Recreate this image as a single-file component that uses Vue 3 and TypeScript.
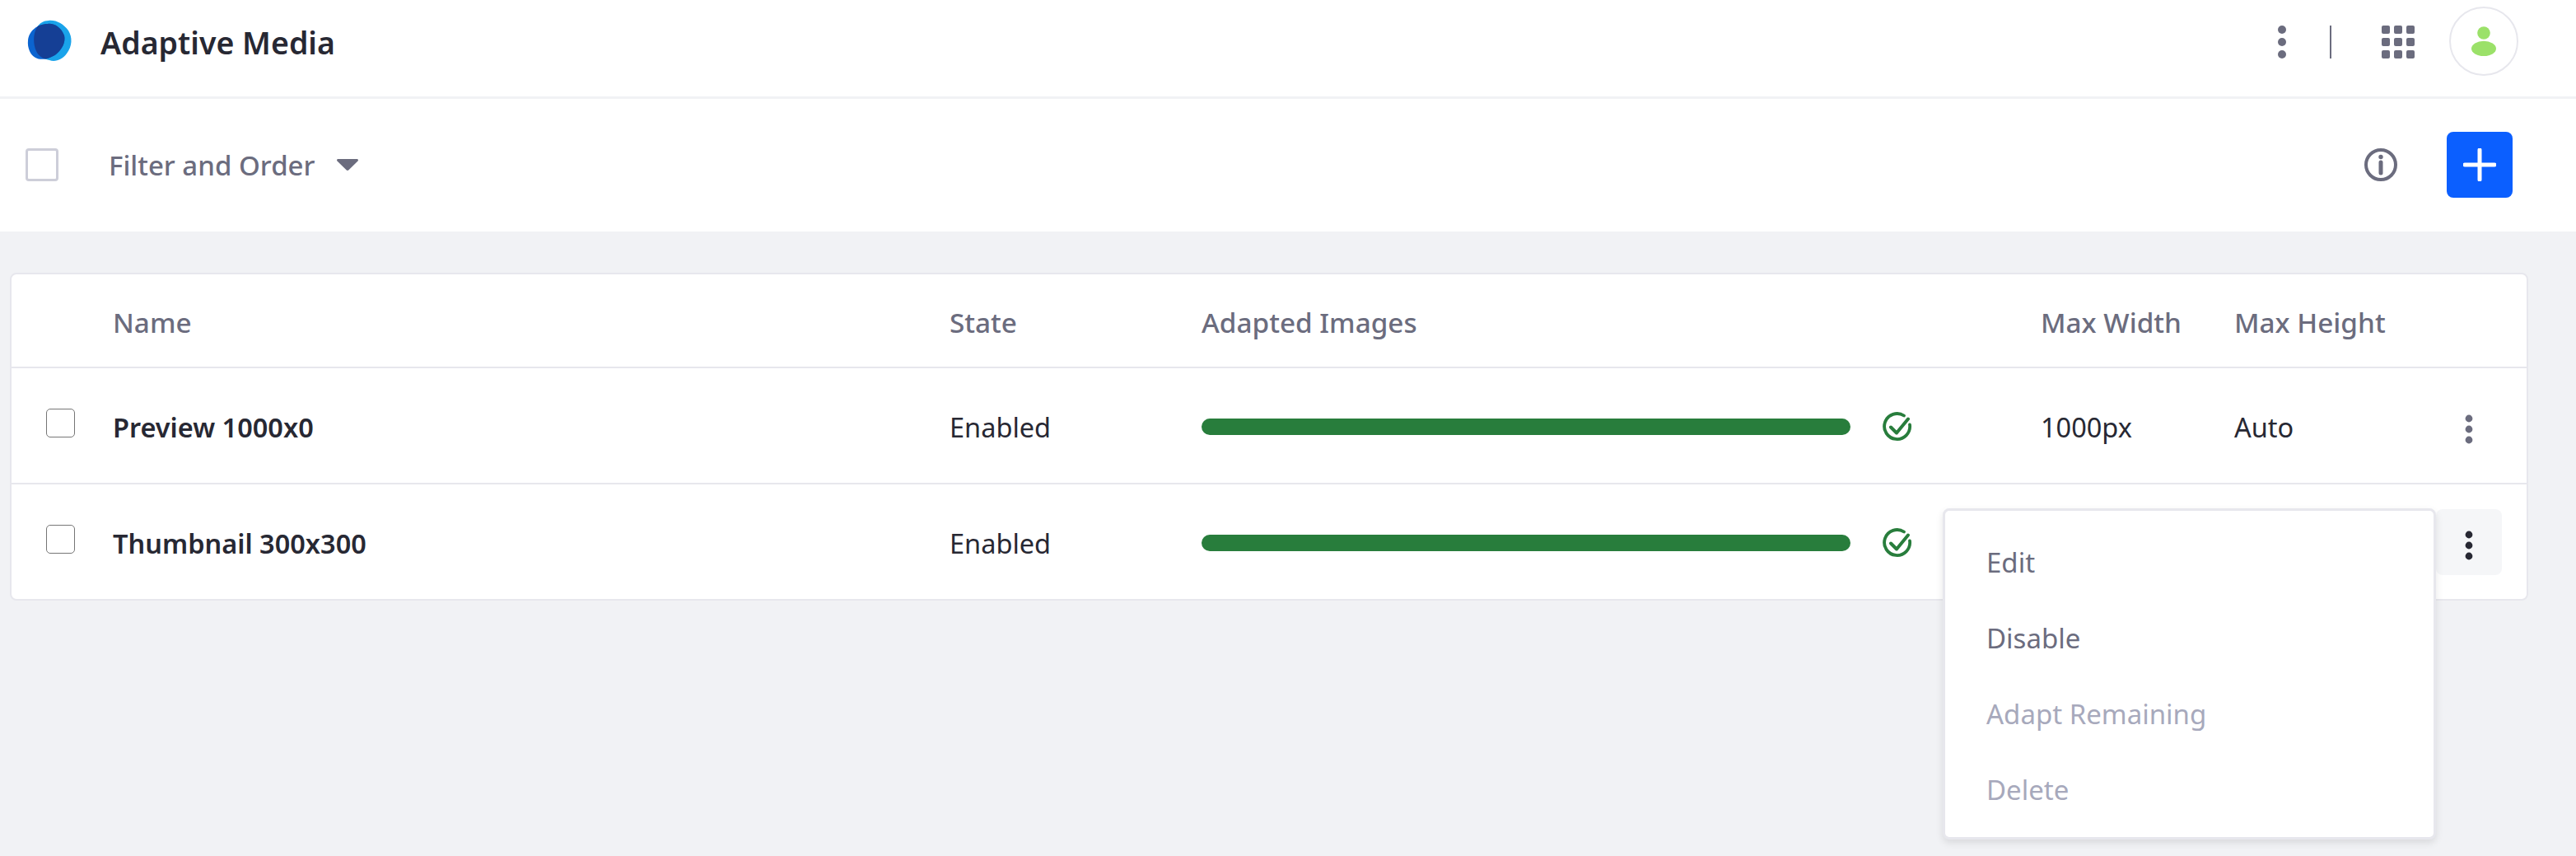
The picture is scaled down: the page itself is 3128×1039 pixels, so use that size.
<script setup lang="ts">
interface Row { name: string; state: string; width: string; height: string; active: boolean }
const rows: Row[] = [
  { name: 'Preview 1000x0', state: 'Enabled', width: '1000px', height: 'Auto', active: false },
  { name: 'Thumbnail 300x300', state: 'Enabled', width: '300px', height: '300px', active: true },
]
const menu = [
  { label: 'Edit', disabled: false },
  { label: 'Disable', disabled: false },
  { label: 'Adapt Remaining', disabled: true },
  { label: 'Delete', disabled: true },
]
</script>

<template>
  <div class="page">
    <header class="nav">
      <svg class="logo" width="60" height="60" viewBox="0 0 60 60">
        <defs>
          <clipPath id="blobclip">
            <path d="M29 5C38 4 47 9 53 17C58 25 58 36 51 45C46 52 37 56 30 53C24 52 17 49 14 42C10 33 10 21 15 13C18 8 23 5 29 5Z" />
          </clipPath>
        </defs>
        <path d="M29 5C38 4 47 9 53 17C58 25 58 36 51 45C46 52 37 56 30 53C24 52 17 49 14 42C10 33 10 21 15 13C18 8 23 5 29 5Z" fill="#1aa3ea" />
        <path d="M4 29C5 18 15 9 28 9C36 8 44 13 48 23C50 32 45 40 38 46C31 51 20 54 13 50C7 47 3 38 4 29Z" fill="#0b64d0" />
        <g clip-path="url(#blobclip)">
          <path d="M4 29C5 18 15 9 28 9C36 8 44 13 48 23C50 32 45 40 38 46C31 51 20 54 13 50C7 47 3 38 4 29Z" fill="#153f95" />
        </g>
      </svg>
      <span class="title">Adaptive Media</span>
      <span class="spacer"></span>
      <svg class="nav-kebab" width="10" height="40" viewBox="0 0 10 40">
        <circle cx="5" cy="5" r="5" /><circle cx="5" cy="20" r="5" /><circle cx="5" cy="35" r="5" />
      </svg>
      <span class="divider"></span>
      <div class="apps">
        <i v-for="n in 9" :key="n"></i>
      </div>
      <div class="avatar">
        <svg width="30" height="36" viewBox="0 0 30 36">
          <circle cx="15" cy="8" r="7.8" fill="#9be169" />
          <ellipse cx="15" cy="27" rx="15" ry="9.2" fill="#9be169" />
        </svg>
      </div>
    </header>

    <section class="toolbar">
      <span class="tool-check"></span>
      <span class="filter">Filter and Order</span>
      <svg class="caret" width="26" height="14" viewBox="0 0 26 14">
        <path d="M1.5 0H24.500C25.800 0 26.400 1.500 25.500 2.400L14.500 13.300C13.700 14.100 12.300 14.100 11.500 13.300L.5 2.400C-.4 1.500.2 0 1.500 0Z" />
      </svg>
      <span class="spacer"></span>
      <svg class="info" width="40" height="40" viewBox="0 0 40 40">
        <circle cx="20" cy="20" r="18" fill="none" stroke="#6b6c7e" stroke-width="4" />
        <circle cx="20" cy="10.500" r="2.700" fill="#6b6c7e" />
        <path d="M20 17V30" stroke="#6b6c7e" stroke-width="5" stroke-linecap="round" fill="none" />
      </svg>
      <button class="add" type="button">
        <svg width="40" height="40" viewBox="0 0 40 40">
          <path d="M20 2V38M2 20H38" stroke="#fff" stroke-width="5" stroke-linecap="round" fill="none" />
        </svg>
      </button>
    </section>

    <main class="card">
      <div class="row head">
        <span></span>
        <span>Name</span>
        <span>State</span>
        <span>Adapted Images</span>
        <span>Max Width</span>
        <span>Max Height</span>
        <span></span>
      </div>
      <div v-for="row in rows" :key="row.name" class="row body">
        <span class="cell-check"><span class="check"></span></span>
        <span class="name">{{ row.name }}</span>
        <span>{{ row.state }}</span>
        <span class="progress">
          <span class="bar"></span>
          <svg class="ok" width="36" height="36" viewBox="0 0 36 36">
            <path d="M26 4.500A15.500 15.500 0 1 0 33 15.500" fill="none" stroke="#287d3c" stroke-width="3.800" stroke-linecap="round" />
            <path d="M10 18.500L17 25.500L31 8.500" fill="none" stroke="#287d3c" stroke-width="4" stroke-linecap="round" stroke-linejoin="round" />
          </svg>
        </span>
        <span>{{ row.active ? '' : row.width }}</span>
        <span>{{ row.active ? '' : row.height }}</span>
        <span class="kebab-wrap">
          <span class="kebab" :class="{ active: row.active }">
            <svg width="10" height="36" viewBox="0 0 10 36">
              <circle cx="5" cy="5" r="4.400" /><circle cx="5" cy="18" r="4.400" /><circle cx="5" cy="31" r="4.400" />
            </svg>
          </span>
          <ul v-if="row.active" class="menu">
            <li v-for="item in menu" :key="item.label" :class="{ disabled: item.disabled }">{{ item.label }}</li>
          </ul>
        </span>
      </div>
    </main>
  </div>
</template>

<style scoped>
.page {
  width: 3128px;
  min-height: 1039px;
  background: #f1f2f5;
  font-family: "Noto Sans", "Open Sans", sans-serif;
  font-size: 32px;
  color: #272833;
  overflow: hidden;
}
.spacer { flex: 1; }
.nav {
  height: 117px;
  box-sizing: content-box;
  background: #fff;
  border-bottom: 3px solid #f1f2f5;
  display: flex;
  align-items: center;
  position: relative;
}
.logo { margin-left: 30px; flex: none; margin-top: -17px; }
.title {
  margin-left: 32px;
  font-size: 37.500px;
  font-weight: 600;
  margin-top: -14px;
}
.nav-kebab { fill: #6b6c7e; margin-top: -16px; flex: none; }
.divider {
  width: 2px;
  height: 40px;
  background: #6b6c7e;
  margin-left: 53px;
  margin-top: -16px;
}
.apps {
  margin-left: 61px;
  margin-top: -16px;
  display: grid;
  grid-template-columns: repeat(3, 10px);
  grid-auto-rows: 10px;
  gap: 5px;
}
.apps i { background: #6b6c7e; border-radius: 2px; display: block; }
.avatar {
  margin-left: 42px;
  margin-right: 70px;
  margin-top: -17px;
  width: 84px;
  height: 84px;
  box-sizing: border-box;
  border: 2px solid #e7e7ed;
  border-radius: 50%;
  display: flex;
  align-items: center;
  justify-content: center;
}
.toolbar {
  height: 161px;
  box-sizing: border-box;
  padding-bottom: 2px;
  background: #fff;
  display: flex;
  align-items: center;
}
.tool-check {
  width: 40px;
  height: 40px;
  box-sizing: border-box;
  border: 3px solid #cdced9;
  border-radius: 4px;
  margin-left: 31px;
}
.filter {
  margin-left: 61px;
  margin-top: 2px;
  color: #6b6c7e;
  font-size: 33px;
  font-weight: 500;
}
.caret { fill: #6b6c7e; margin-left: 26px; flex: none; }
.info { flex: none; }
.add {
  width: 80px;
  height: 80px;
  border: 0;
  padding: 0;
  margin-left: 60px;
  margin-right: 77px;
  background: #0b5fff;
  border-radius: 8px;
  display: flex;
  align-items: center;
  justify-content: center;
}
.card {
  width: 3058px;
  box-sizing: border-box;
  margin: 50px 0 0 12px;
  background: #fff;
  border: 2px solid #e7e7ed;
  border-radius: 8px;
}
.row {
  display: grid;
  grid-template-columns: 123px 1016px 306px 1019px 235px 245px 80px;
  align-items: center;
  padding-right: 30px;
}
.row.head {
  height: 109px;
  padding-top: 3px;
  color: #6b6c7e;
  font-weight: 500;
  font-size: 33.300px;
}
.row.body {
  height: 136px;
  padding-top: 3px;
  border-top: 2px solid #e7e7ed;
  box-sizing: content-box;
  font-size: 32.500px;
}
.cell-check { display: flex; padding-left: 42px; }
.check {
  width: 35px;
  height: 35px;
  box-sizing: border-box;
  border: 1px solid #767676;
  border-radius: 5px;
  background: #fff;
  margin-top: -10px;
}
.name { font-weight: 600; }
.progress { display: flex; align-items: center; }
.bar {
  width: 788px;
  height: 20px;
  border-radius: 10px;
  background: #287d3c;
  flex: none;
}
.ok { margin-left: 39px; flex: none; }
.kebab-wrap { position: relative; height: 80px; margin-top: -3px; }
.kebab {
  width: 80px;
  height: 80px;
  border-radius: 8px;
  display: flex;
  align-items: center;
  justify-content: center;
  fill: #6b6c7e;
}
.kebab svg { margin-top: 8px; }
.kebab.active { background: #f5f6f8; fill: #272833; }
.menu {
  position: absolute;
  top: -1px;
  right: 80px;
  width: 599px;
  height: 402px;
  box-sizing: border-box;
  margin: 0;
  padding: 17px 0;
  list-style: none;
  background: #fff;
  border: 3px solid #e7e7ed;
  border-radius: 8px;
  box-shadow: 0 4px 10px rgba(0, 0, 0, 0.1);
  z-index: 2;
}
.menu li {
  height: 92px;
  padding-left: 50px;
  display: flex;
  align-items: center;
  color: #6b6c7e;
  font-size: 33px;
}
.menu li.disabled { color: #a7a9bc; }
</style>

<style>
html, body { margin: 0; background: #f1f2f5; }
</style>
